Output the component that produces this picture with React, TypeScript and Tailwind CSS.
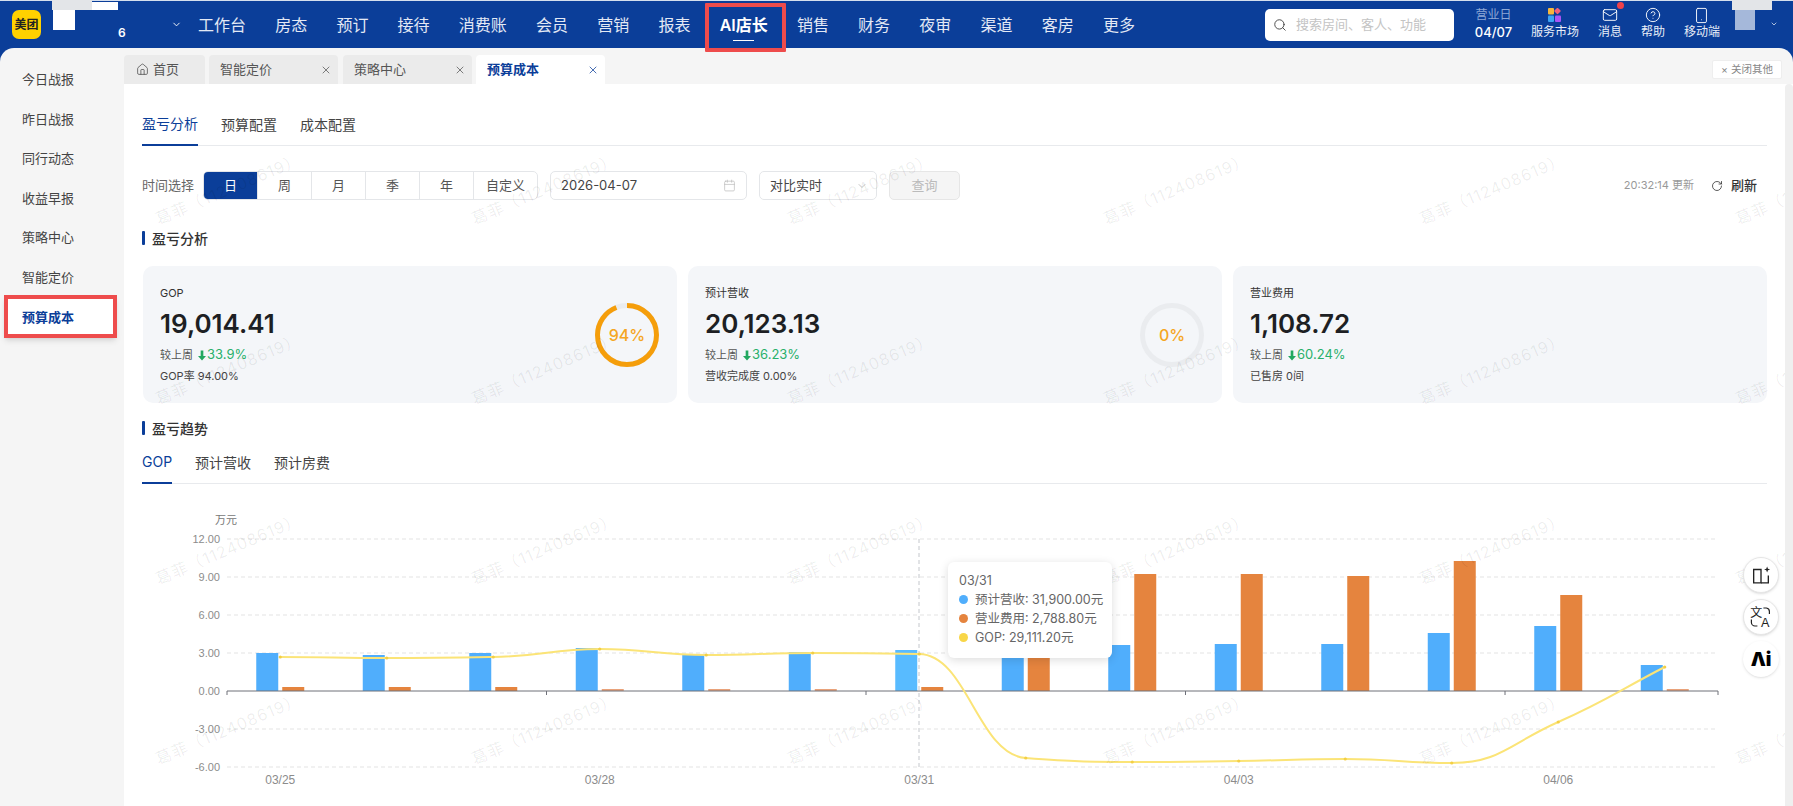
import { useMemo } from "react";
import {
  Calendar,
  ChevronDown,
  CircleHelp,
  House,
  Mail,
  RotateCw,
  Search,
  Smartphone,
  X,
} from "lucide-react";

const BLUE = "#0b3e99";

const NAV = ["工作台", "房态", "预订", "接待", "消费账", "会员", "营销", "报表", "AI店长", "销售", "财务", "夜审", "渠道", "客房", "更多"];
const SIDE = ["今日战报", "昨日战报", "同行动态", "收益早报", "策略中心", "智能定价", "预算成本"];
const TABS = ["智能定价", "策略中心", "预算成本"];
const RANGES = ["日", "周", "月", "季", "年", "自定义"];

// chart coordinates are page pixels, the svg viewBox starts at 124,500
const AXIS_LEFT = 227;
const BAND = 106.5;
const ZERO_Y = 691;
const GRID = [
  { y: 539, label: "12.00" },
  { y: 577, label: "9.00" },
  { y: 615, label: "6.00" },
  { y: 653, label: "3.00" },
  { y: 691, label: "0.00" },
  { y: 729, label: "-3.00" },
  { y: 767, label: "-6.00" },
];
const BLUE_TOPS = [653, 655, 653, 648, 654, 652, 650, 645, 645, 644, 644, 633, 626, 665];
const ORANGE_TOPS = [687, 687, 687, 689, 689, 689, 687, 575, 574, 574, 576, 561, 595, 689];
const LINE_YS = [657, 658, 657, 649, 655, 653, 654, 758, 762, 761, 759, 763, 722, 667];
const X_LABELS = [
  { i: 0, label: "03/25" },
  { i: 3, label: "03/28" },
  { i: 6, label: "03/31" },
  { i: 9, label: "04/03" },
  { i: 12, label: "04/06" },
];

const center = (i: number) => AXIS_LEFT + BAND * (i + 0.5);

function smoothPath(ys: number[]) {
  const last = ys.length - 1;
  const slope = ys.map((y, i) => {
    if (i === 0) return 0;
    if (i === last) return y - ys[i - 1];
    const a = y - ys[i - 1];
    const b = ys[i + 1] - y;
    if (a * b <= 0) return 0;
    return (2 * a * b) / (a + b);
  });
  let d = `M${center(0)} ${ys[0]}`;
  for (let i = 1; i < ys.length; i++) {
    const x0 = center(i - 1);
    const x1 = center(i);
    d += ` C${x0 + BAND * 0.45} ${ys[i - 1] + slope[i - 1] * 0.45} ${x1 - BAND * 0.45} ${ys[i] - slope[i] * 0.45} ${x1} ${ys[i]}`;
  }
  return d;
}

function Watermarks() {
  const cells = Array.from({ length: 24 });
  return (
    <div className="pointer-events-none absolute left-[-54px] top-[15px] z-10 grid grid-cols-[repeat(6,316px)] auto-rows-[180px]">
      {cells.map((_, i) => (
        <div key={i} className="flex items-center justify-center">
          <span className="-rotate-[23deg] whitespace-nowrap text-[16px] tracking-[1px] text-black/[0.07]">
            葛菲（112408619）
          </span>
        </div>
      ))}
    </div>
  );
}

function Header() {
  return (
    <header className="relative z-30 flex h-12 shrink-0 border-t border-[#d5dfee] text-white">
      <div className="relative h-full w-[198px] shrink-0">
        <div className="absolute left-3 top-[9px] flex h-[29px] w-[29px] items-center justify-center rounded-[7px] bg-[#ffd100] text-[12px] font-bold text-[#222]">
          美团
        </div>
        <div className="absolute left-[52px] top-[-1px] h-[10px] w-[40px] bg-[#e3e5e8]" />
        <div className="absolute left-[92px] top-[1px] h-[8px] w-[26px] bg-white" />
        <div className="absolute left-[53px] top-[9px] h-[20px] w-[22px] bg-white" />
        <span className="absolute left-[118px] top-[23px] text-[12px] font-semibold">6</span>
        <ChevronDown size={11} strokeWidth={2} className="absolute left-[171px] top-[18px]" />
      </div>
      <nav className="flex h-full gap-[29.2px]">
        {NAV.map((item) => {
          const active = item === "AI店长";
          return (
            <div
              key={item}
              className={`relative flex h-full items-center text-[16px] ${active ? "font-semibold" : "text-[#e3e9f5]"}`}
            >
              {item}
              {active && (
                <>
                  <span className="absolute bottom-[7px] left-[13px] h-px w-[21px] bg-white" />
                  <span className="absolute bottom-[-4px] left-[-15px] right-[-18px] top-[2px] rounded-[1px] border-4 border-[#ee4c4c]" />
                </>
              )}
            </div>
          );
        })}
      </nav>
      <div className="ml-[130px] mt-2 flex h-8 w-[189px] items-center gap-[9px] rounded-[5px] bg-white pl-[8px]">
        <Search size={14} strokeWidth={1.6} className="text-[#444]" />
        <span className="text-[13px] text-[#c4c4c4]">搜索房间、客人、功能</span>
      </div>
      <div className="relative ml-[21px] flex flex-1 gap-[19px] pt-[6px] text-[12px] leading-4">
        <div className="flex w-[37px] flex-col items-center">
          <span className="whitespace-nowrap text-[#8ea8d6]">营业日</span>
          <span className="mt-px text-[13px] font-medium">04/07</span>
        </div>
        <HeaderItem label="服务市场" icon={<MarketIcon />} />
        <HeaderItem
          label="消息"
          icon={
            <span className="relative flex">
              <Mail size={16} strokeWidth={1.4} />
              <span className="absolute right-[-6px] top-[-5px] h-[7px] w-[7px] rounded-full bg-[#f0424a]" />
            </span>
          }
        />
        <HeaderItem label="帮助" icon={<CircleHelp size={16} strokeWidth={1.4} />} />
        <HeaderItem label="移动端" icon={<Smartphone size={17} strokeWidth={1.3} />} />
        <div className="absolute left-[257px] top-[-1px] h-[10px] w-[40px] bg-[#e3e5e8]" />
        <div className="absolute left-[260px] top-[9px] h-[20px] w-[20px] bg-[#a5b8da]" />
        <ChevronDown size={8} strokeWidth={2} className="absolute left-[295px] top-[19px]" />
      </div>
    </header>
  );
}

function HeaderItem({ label, icon }: { label: string; icon: React.ReactNode }) {
  return (
    <div className="flex flex-col items-center text-[#e9eef8]">
      <div className="flex h-4 items-center text-white">{icon}</div>
      <span className="mt-px whitespace-nowrap">{label}</span>
    </div>
  );
}

function MarketIcon() {
  return (
    <svg width="13" height="14" viewBox="0 0 13 14">
      <rect x="0" y="0" width="6" height="6.5" rx="1" fill="#f6b73c" />
      <rect x="7" y="0.5" width="5" height="5" rx="1" fill="#f2617a" transform="rotate(45 9.5 3)" />
      <rect x="0" y="7.5" width="6" height="6.5" rx="1" fill="#3ba4f5" />
      <rect x="7" y="7.5" width="6" height="6.5" rx="1" fill="#a855f7" />
    </svg>
  );
}

function Sidebar() {
  return (
    <aside className="w-[124px] shrink-0 pt-3 text-[13px] text-[#444]">
      {SIDE.map((item) => {
        const active = item === "预算成本";
        return (
          <div key={item} className="relative flex h-[39.6px] items-center pl-[22px]">
            {active && (
              <span className="absolute bottom-[-1px] left-1 right-[7px] top-[-3px] border-4 border-[#ee4c4c] bg-white shadow-md" />
            )}
            <span className={`relative ${active ? "font-semibold text-[#0b3e99]" : ""}`}>{item}</span>
          </div>
        );
      })}
    </aside>
  );
}

function TabBar() {
  return (
    <div className="flex h-9 shrink-0 pt-[7px] text-[13px] text-[#555]">
      <div className="mr-1 flex h-[29px] w-[81px] items-center gap-[4px] rounded-t-[4px] bg-[#ebebeb] pl-[12px]">
        <House size={13} strokeWidth={1.5} />
        首页
      </div>
      {TABS.map((tab, i) => {
        const active = tab === "预算成本";
        return (
          <div
            key={tab}
            className={`flex h-[29px] w-[129px] items-center justify-between rounded-t-[4px] pl-[11px] pr-[6px] ${i === 0 ? "mr-[5px]" : "mr-1"} ${active ? "bg-white font-semibold text-[#0b3e99]" : "bg-[#ebebeb]"}`}
          >
            {tab}
            <X size={12} strokeWidth={1.5} />
          </div>
        );
      })}
      <div className="ml-auto mr-[11px] mt-[5px] flex h-[19px] w-[70px] items-center justify-center rounded-[2px] border border-[#eee] bg-white text-[10.5px] text-[#888]">
        × 关闭其他
      </div>
    </div>
  );
}

function Underlined({ items, active, className }: { items: string[]; active: string; className: string }) {
  return (
    <div className={`flex gap-[23px] border-b border-[#e8eaed] text-[14px] text-[#444] ${className}`}>
      {items.map((item) => (
        <div
          key={item}
          className={`-mb-px flex items-center ${item === active ? "border-b-2 border-[#0b3e99] text-[#0b3e99]" : ""}`}
        >
          <span className="pb-[6px]">{item}</span>
        </div>
      ))}
    </div>
  );
}

function FilterRow() {
  return (
    <div className="mt-[25px] flex h-[29px] items-center text-[13px] text-[#555]">
      <span className="text-[#666]">时间选择</span>
      <div className="ml-[9px] flex h-full w-[335px] overflow-hidden rounded-[5px] border border-[#e4e6e9]">
        {RANGES.map((r, i) => (
          <div
            key={r}
            className={`flex items-center justify-center ${i === 5 ? "flex-1" : "w-[54px] border-r border-[#e4e6e9]"} ${i === 0 ? "bg-[#0b3e99] text-white" : ""}`}
          >
            {r}
          </div>
        ))}
      </div>
      <div className="ml-3 flex h-full w-[197px] items-center justify-between rounded-[5px] border border-[#e4e6e9] px-[10px] text-[#444]">
        2026-04-07
        <Calendar size={13} strokeWidth={1.3} className="text-[#bbb]" />
      </div>
      <div className="ml-3 flex h-full w-[118px] items-center justify-between rounded-[5px] border border-[#e4e6e9] pl-[10px] pr-2 text-[#444]">
        对比实时
        <ChevronDown size={12} strokeWidth={1.4} className="text-[#aaa]" />
      </div>
      <div className="ml-3 flex h-full w-[71px] items-center justify-center rounded-[5px] border border-[#e6e6e6] bg-[#f5f5f5] text-[#bbb]">
        查询
      </div>
      <span className="ml-auto text-[11px] text-[#999]">20:32:14 更新</span>
      <RotateCw size={12} strokeWidth={1.6} className="ml-[17px] text-[#333]" />
      <span className="ml-[8px] mr-[10px] font-medium text-[#333]">刷新</span>
    </div>
  );
}

function SectionTitle({ children, className }: { children: string; className: string }) {
  return (
    <div className={`flex h-5 items-center gap-[7px] text-[14px] font-medium text-[#333] ${className}`}>
      <span className="h-[14px] w-[3px] rounded-[1px] bg-[#0b3e99]" />
      {children}
    </div>
  );
}

function Ring({ pct }: { pct: number }) {
  const r = 29.5;
  const len = 2 * Math.PI * r;
  return (
    <svg width="64" height="64" viewBox="0 0 64 64">
      <circle cx="32" cy="32" r={r} fill="none" stroke="#eaecef" strokeWidth="5" />
      <circle
        cx="32"
        cy="32"
        r={r}
        fill="none"
        stroke="#f59e0b"
        strokeWidth="5"
        strokeDasharray={`${(len * pct) / 100} ${len}`}
        transform="rotate(-90 32 32)"
      />
      <text x="32" y="37.5" textAnchor="middle" fontSize="16" fontWeight="500" fill="#f5a623">
        {pct}%
      </text>
    </svg>
  );
}

function StatCard({
  label,
  value,
  change,
  note,
  ring,
}: {
  label: string;
  value: string;
  change: string;
  note: string;
  ring?: number;
}) {
  return (
    <div className="flex h-[137px] items-center justify-between rounded-[10px] bg-[#f4f6f9] pl-[17px] pr-[18px]">
      <div className="self-start pt-[19px]">
        <div className="text-[11px] leading-4 text-[#333]">{label}</div>
        <div className="mt-[7px] text-[26px] font-semibold leading-8 text-[#1d1f23]">{value}</div>
        <div className="mt-[6px] flex h-[18px] items-center text-[11px] text-[#555]">
          较上周
          <svg width="8" height="11" viewBox="0 0 9 11" className="ml-[5px] mr-px">
            <path d="M3 0h3v6h3L4.5 11 0 6h3z" fill="#22a860" />
          </svg>
          <span className="text-[13px] text-[#28b06b]">{change}</span>
        </div>
        <div className="mt-[4px] text-[11px] leading-4 text-[#444]">{note}</div>
      </div>
      {ring !== undefined && <Ring pct={ring} />}
    </div>
  );
}

function Chart() {
  const line = useMemo(() => smoothPath(LINE_YS), []);
  const right = AXIS_LEFT + BAND * 14;
  return (
    <div className="relative mt-4 h-[306px] -ml-[18px] -mr-[18px]">
      <svg width="1661" height="306" viewBox="124 500 1661 306" className="block font-['Liberation_Sans',sans-serif]">
        <text x="226" y="524" textAnchor="middle" fontSize="11" fill="#777" fontFamily="Noto Sans CJK SC">
          万元
        </text>
        {GRID.map((g) => (
          <g key={g.y}>
            {g.y !== ZERO_Y && (
              <line x1={AXIS_LEFT} x2={right} y1={g.y} y2={g.y} stroke="#e3e3e3" strokeDasharray="4 3" />
            )}
            <text x="220" y={g.y + 4} textAnchor="end" fontSize="11" fill="#8c8c8c">
              {g.label}
            </text>
          </g>
        ))}
        <line x1="919" x2="919" y1="539" y2="767" stroke="#c4c7cc" strokeDasharray="4 3" />
        {BLUE_TOPS.map((top, i) => (
          <rect
            key={i}
            x={center(i) - 24}
            y={top}
            width="22"
            height={ZERO_Y - top}
            fill={i === 6 ? "#58bbff" : "#50aefc"}
          />
        ))}
        {ORANGE_TOPS.map((top, i) => (
          <rect
            key={i}
            x={center(i) + 2}
            y={top}
            width="22"
            height={ZERO_Y - top}
            fill={top > 688 ? "#e9a27a" : "#e5843e"}
          />
        ))}
        <line x1={AXIS_LEFT} x2={right} y1={ZERO_Y} y2={ZERO_Y} stroke="#6e7079" />
        {[0, 3, 6, 9, 12, 14].map((i) => (
          <line
            key={i}
            x1={AXIS_LEFT + BAND * i}
            x2={AXIS_LEFT + BAND * i}
            y1={ZERO_Y}
            y2={ZERO_Y + 4}
            stroke="#6e7079"
          />
        ))}
        <path d={line} fill="none" stroke="#fbe477" strokeWidth="2" />
        {LINE_YS.map((y, i) => (
          <circle key={i} cx={center(i)} cy={y} r="1.6" fill="#f3cf45" />
        ))}
        {X_LABELS.map((l) => (
          <text key={l.i} x={center(l.i)} y="784" textAnchor="middle" fontSize="12" fill="#8c8c8c">
            {l.label}
          </text>
        ))}
      </svg>
      <div className="absolute left-[824px] top-[62px] z-20 h-[96px] w-[164px] rounded-[6px] bg-white pl-[11px] pt-[9px] text-[12.5px] leading-[19px] text-[#666] shadow-[0_2px_10px_rgba(0,0,0,0.14)]">
        <div>03/31</div>
        <TooltipRow color="#50aefc" text="预计营收: 31,900.00元" />
        <TooltipRow color="#e5843e" text="营业费用: 2,788.80元" />
        <TooltipRow color="#f8d648" text="GOP: 29,111.20元" />
      </div>
    </div>
  );
}

function TooltipRow({ color, text }: { color: string; text: string }) {
  return (
    <div className="flex items-center gap-[7px] whitespace-nowrap">
      <span className="h-[9px] w-[9px] rounded-full" style={{ backgroundColor: color }} />
      {text}
    </div>
  );
}

function FloatingTools() {
  return (
    <div className="absolute right-[6px] top-[473px] z-20 flex flex-col gap-[6px]">
      <div className="flex h-9 w-9 items-center justify-center rounded-full border border-[#e6e6e6] bg-white shadow-sm">
        <svg width="22" height="22" viewBox="0 0 18 18" fill="none" stroke="#222" strokeWidth="1.1">
          <path d="M3 4.5h6v11H3z" />
          <path d="M9 15.5h6v-6" />
          <path d="M14 2l.7 1.8 1.8.7-1.8.7-.7 1.8-.7-1.8-1.8-.7 1.8-.7z" fill="#222" stroke="none" />
        </svg>
      </div>
      <div className="flex h-9 w-9 items-center justify-center rounded-full border border-[#e6e6e6] bg-white shadow-sm">
        <svg width="24" height="24" viewBox="0 0 20 20" fill="none" stroke="#222" strokeWidth="1">
          <text x="1" y="10" fontSize="10" fill="#222" stroke="none" fontFamily="Noto Sans CJK SC">
            文
          </text>
          <text x="10" y="18.5" fontSize="10.5" fill="#222" stroke="none" fontFamily="Liberation Sans">
            A
          </text>
          <path d="M12 2.5h2.5a3 3 0 0 1 2.5 3v2" />
          <path d="M7 17.5H5a3 3 0 0 1-3-3v-2.5" />
        </svg>
      </div>
      <div className="flex h-9 w-9 items-center justify-center rounded-full bg-white text-[19px] font-black leading-none text-black shadow-sm">
        Λi
      </div>
    </div>
  );
}

export default function App() {
  return (
    <div
      className="flex h-screen w-full flex-col overflow-hidden font-[Inter,'Noto_Sans_CJK_SC',sans-serif]"
      style={{ backgroundColor: BLUE }}
    >
      <Header />
      <div className="flex min-h-0 flex-1 overflow-hidden rounded-t-[14px] bg-[#f5f5f5]">
        <Sidebar />
        <div className="flex min-w-0 flex-1 flex-col">
          <TabBar />
          <div className="flex min-h-0 flex-1 bg-white">
            <main className="relative min-w-0 flex-1 overflow-hidden px-[18px]">
              <Underlined items={["盈亏分析", "预算配置", "成本配置"]} active="盈亏分析" className="mt-[19px] h-[43px] pt-[5px]" />
              <FilterRow />
              <SectionTitle className="mt-[28px]">盈亏分析</SectionTitle>
              <div className="mt-[18px] grid grid-cols-3 gap-[11px] pl-px">
                <StatCard label="GOP" value="19,014.41" change="33.9%" note="GOP率 94.00%" ring={94} />
                <StatCard label="预计营收" value="20,123.13" change="36.23%" note="营收完成度 0.00%" ring={0} />
                <StatCard label="营业费用" value="1,108.72" change="60.24%" note="已售房 0间" />
              </div>
              <SectionTitle className="mt-[15px]">盈亏趋势</SectionTitle>
              <Underlined items={["GOP", "预计营收", "预计房费"]} active="GOP" className="mt-2 h-[38px]" />
              <Chart />
              <Watermarks />
              <FloatingTools />
            </main>
            <div className="w-2 shrink-0 rounded-t-[4px] bg-[#efefef]" />
          </div>
        </div>
      </div>
    </div>
  );
}
